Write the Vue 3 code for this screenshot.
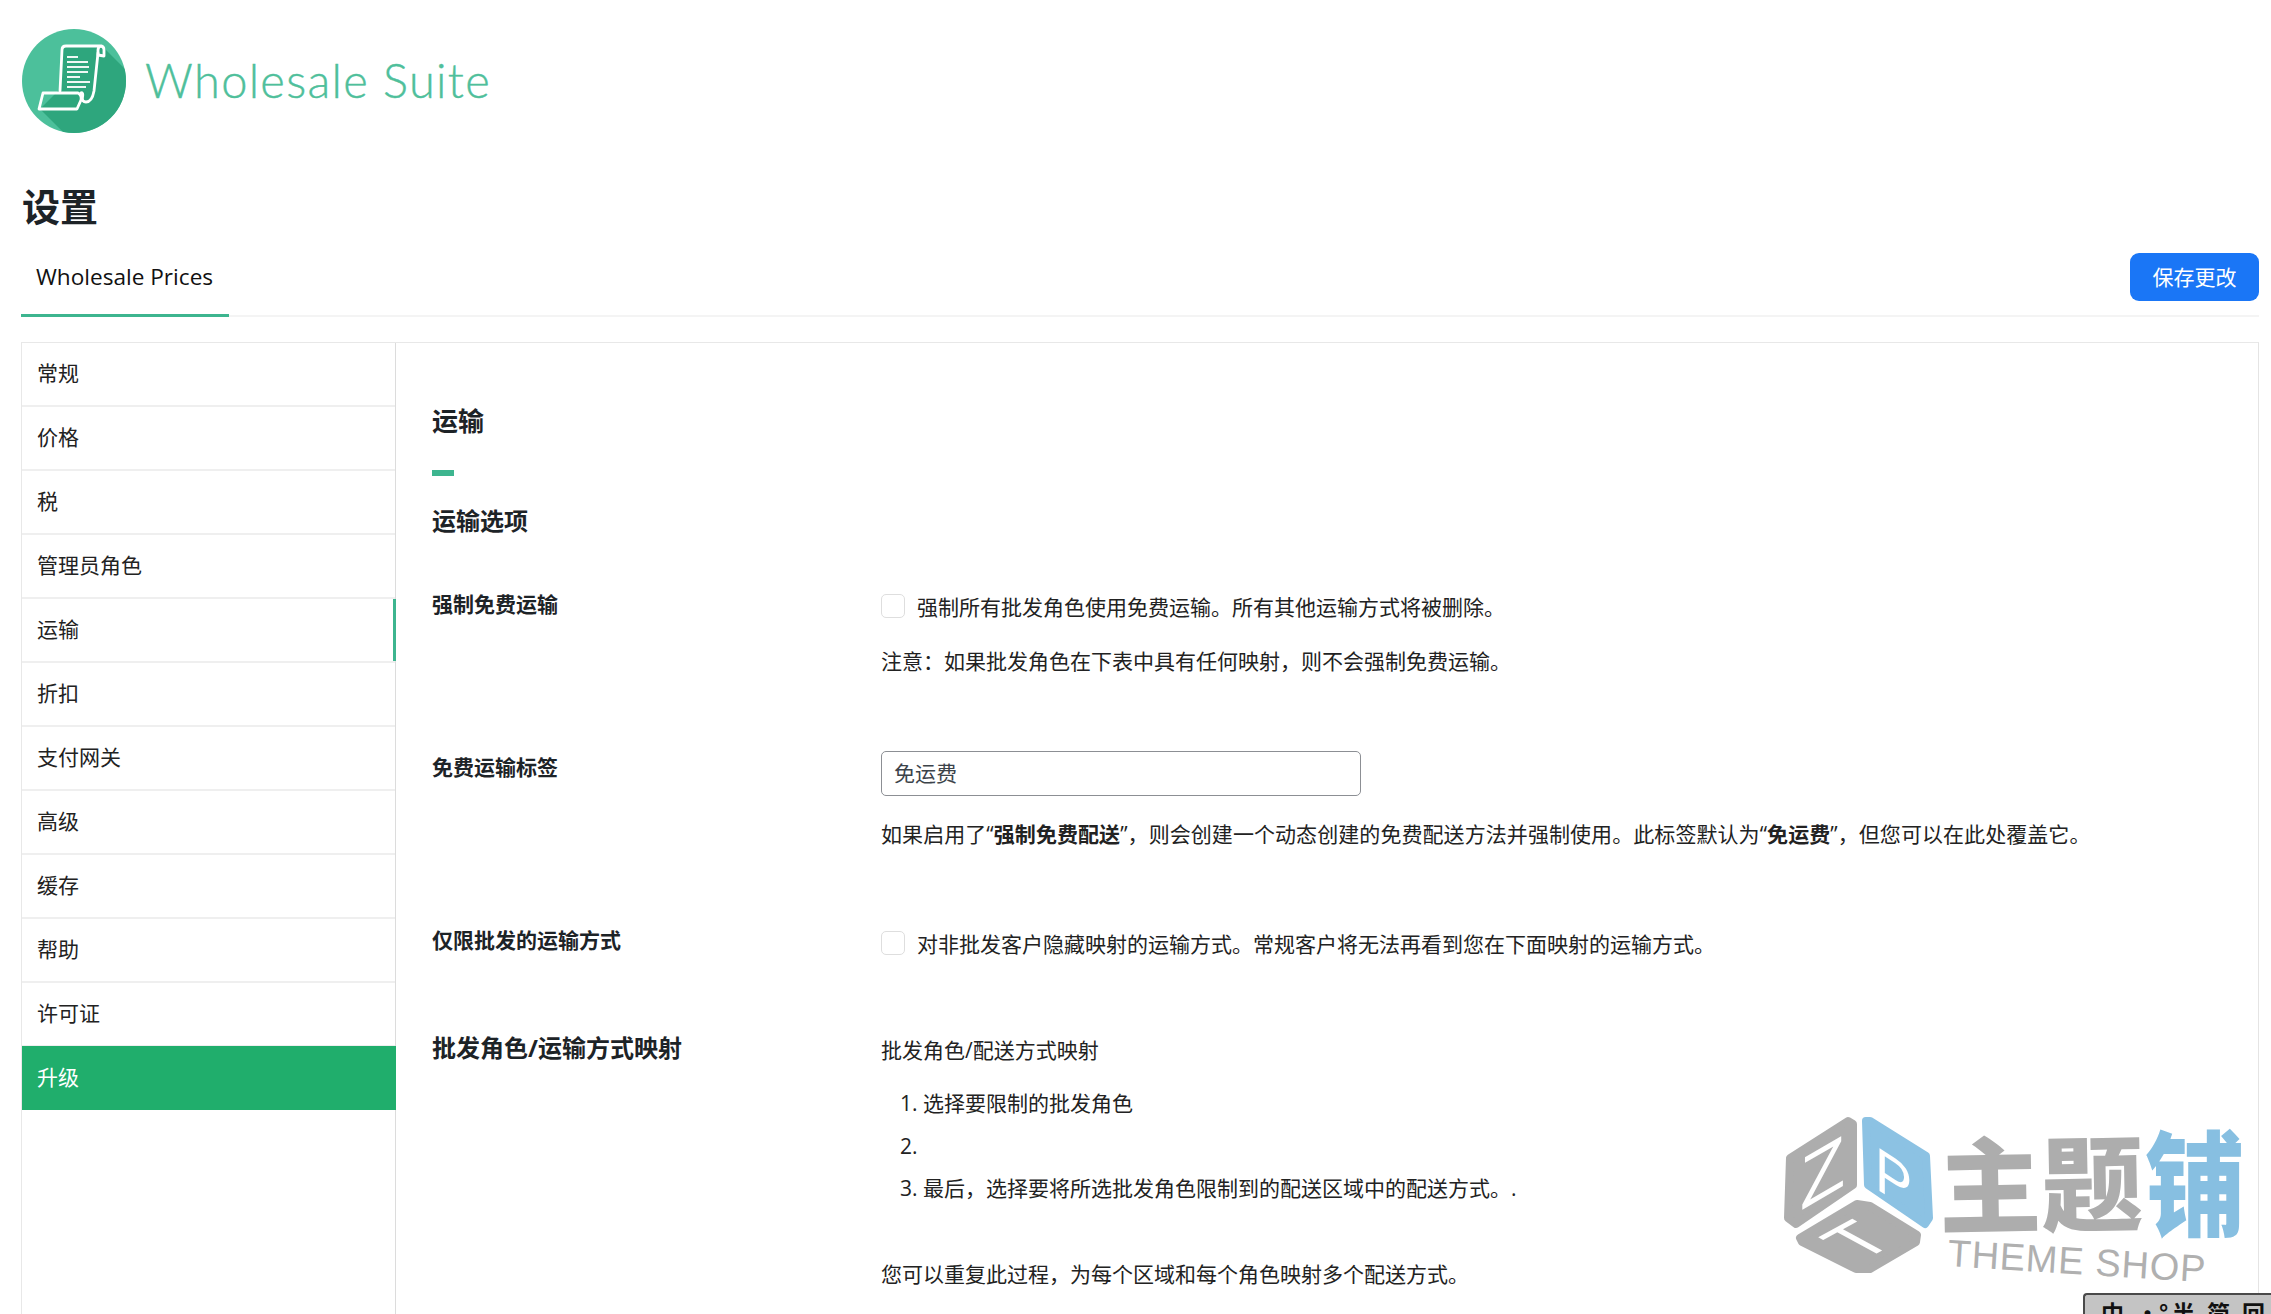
<script setup>
const navItems = [
  { label: '常规' },
  { label: '价格' },
  { label: '税' },
  { label: '管理员角色' },
  { label: '运输', active: true },
  { label: '折扣' },
  { label: '支付网关' },
  { label: '高级' },
  { label: '缓存' },
  { label: '帮助' },
  { label: '许可证' },
  { label: '升级', upgrade: true }
]
</script>

<template>
  <div class="page">
    <header class="brand">
      <svg class="brand-mark" viewBox="0 0 104 104" width="104" height="104" aria-hidden="true">
        <defs>
          <clipPath id="disc"><circle cx="52" cy="52" r="52" /></clipPath>
        </defs>
        <circle cx="52" cy="52" r="52" fill="#4cc09b" />
        <polygon clip-path="url(#disc)" points="80,17 120,57 120,120 58,120 18,80 38,60 40,17" fill="#2ea67d" />
        <g fill="none" stroke="#fff" stroke-width="2.8" stroke-linejoin="round" stroke-linecap="round">
          <path d="M38 62 L40 21 Q40 17 44 17 L78 17 Q82 17 82 21 L82 27 L76 26 L76 21 Q76 18 79 17" />
          <path d="M76 24 L72 62 Q70 73 64 73 Q60 73 60 68 L60 64" />
          <path d="M17 80 L21 64 L56 64 Q60 66 59 71 L55 80 Z" />
          <path d="M59 64 Q62 64 60 70" />
        </g>
        <g stroke="#fff" stroke-width="2" opacity="0.92">
          <line x1="45" y1="28" x2="56" y2="28" />
          <line x1="45" y1="33" x2="66" y2="33" />
          <line x1="45" y1="38" x2="67" y2="38" />
          <line x1="45" y1="43" x2="66" y2="43" />
          <line x1="45" y1="48" x2="58" y2="48" />
          <line x1="45" y1="53" x2="68" y2="53" />
          <line x1="45" y1="58" x2="64" y2="58" />
        </g>
      </svg>
      <span class="brand-name">Wholesale Suite</span>
    </header>

    <h1 class="title">设置</h1>

    <div class="tabs">
      <div class="tab">Wholesale Prices</div>
      <button class="save" type="button">保存更改</button>
    </div>

    <div class="panel">
      <nav class="side">
        <div
          v-for="item in navItems"
          :key="item.label"
          class="side-item"
          :class="{ active: item.active, upgrade: item.upgrade }"
        >{{ item.label }}</div>
      </nav>

      <main class="content">
        <h2 class="section">运输</h2>
        <div class="accent"></div>
        <h3 class="sub">运输选项</h3>

        <div class="row row-first">
          <div class="label">强制免费运输</div>
          <div class="field">
            <div class="check-line"><span class="check"></span><span>强制所有批发角色使用免费运输。所有其他运输方式将被删除。</span></div>
            <p class="note">注意：如果批发角色在下表中具有任何映射，则不会强制免费运输。</p>
          </div>
        </div>

        <div class="row">
          <div class="label">免费运输标签</div>
          <div class="field">
            <div class="input">免运费</div>
            <p class="hint">如果启用了“<strong>强制免费配送</strong>”，则会创建一个动态创建的免费配送方法并强制使用。此标签默认为“<strong>免运费</strong>”，但您可以在此处覆盖它。</p>
          </div>
        </div>

        <div class="row">
          <div class="label">仅限批发的运输方式</div>
          <div class="field field-check">
            <div class="check-line"><span class="check"></span><span>对非批发客户隐藏映射的运输方式。常规客户将无法再看到您在下面映射的运输方式。</span></div>
          </div>
        </div>

        <div class="row row-map">
          <div class="label label-big">批发角色/运输方式映射</div>
          <div class="field field-map">
            <p class="line">批发角色/配送方式映射</p>
            <ol class="steps">
              <li>选择要限制的批发角色</li>
              <li></li>
              <li>最后，选择要将所选批发角色限制到的配送区域中的配送方式。.</li>
            </ol>
            <p class="repeat">您可以重复此过程，为每个区域和每个角色映射多个配送方式。</p>
          </div>
        </div>
      </main>
    </div>

    <svg class="watermark" viewBox="0 0 531 234" width="531" height="234" aria-label="主题铺 THEME SHOP">
      <g stroke-linejoin="round" stroke-width="8">
        <polygon points="50,78 108,41 113,44 113,105 56,144 48,138" fill="#adadad" stroke="#adadad" />
        <polygon points="126,41 130,41 186,76 189,138 185,144 128,105" fill="#8cc2e3" stroke="#8cc2e3" />
        <polygon points="60,158 117,124 130,126 177,155 176,162 130,189 116,189 62,162" fill="#adadad" stroke="#adadad" />
      </g>
      <text class="wm-cube" transform="matrix(1,-0.58,0,1,60,131)" font-size="74">Z</text>
      <text class="wm-cube" transform="matrix(0.9,0.58,0,1,135,108)" font-size="62">P</text>
      <text class="wm-cube" transform="matrix(1.5,-0.82,1.6,0.87,121,182)" font-size="40">T</text>
      <text class="wm-cn" x="199" y="144" font-size="104" textLength="204" lengthAdjust="spacingAndGlyphs" transform="rotate(-1 300 105)">主题</text>
      <text class="wm-cn wm-blue" transform="translate(405 147) scale(0.98 1.11)" font-size="102">铺</text>
      <text class="wm-en" x="207" y="186" font-size="38" textLength="258" transform="rotate(3.6 207 186)">THEME SHOP</text>
    </svg>

    <div class="ime">
      <span class="ime-key">中</span>
      <span class="ime-punct">·°</span>
      <span class="ime-key">半</span>
      <span class="ime-key">简</span>
      <span class="ime-key">回</span>
    </div>
  </div>
</template>

<style>
html, body {
  margin: 0;
  background: #fff;
  overflow: hidden;
}
</style>

<style scoped>
.page {
  position: relative;
  width: 2271px;
  height: 1314px;
  overflow: hidden;
  box-sizing: border-box;
  padding: 29px 12px 0 21px;
  background: #fff;
  color: #222;
  font-family: "Open Sans", "Noto Sans CJK SC", sans-serif;
  font-size: 21px;
}
.brand {
  display: flex;
  align-items: center;
  height: 104px;
  padding-left: 1px;
}
.brand-mark {
  flex: none;
}
.brand-name {
  margin-left: 19px;
  padding-bottom: 2px;
  font-family: "Lato", sans-serif;
  font-weight: 300;
  font-size: 47px;
  letter-spacing: 1.3px;
  line-height: 1;
  color: #4fbf9b;
  -webkit-text-stroke: 0.4px #4fbf9b;
}
.title {
  margin: 48px 0 0 1px;
  font-size: 38px;
  line-height: 50px;
  font-weight: 700;
  color: #1d2327;
}
.tabs {
  display: flex;
  align-items: flex-start;
  justify-content: space-between;
  height: 86px;
  box-sizing: border-box;
  border-bottom: 2px solid #f4f4f4;
}
.tab {
  box-sizing: border-box;
  height: 86px;
  padding: 30px 16px 0 15px;
  line-height: 32px;
  font-size: 22.6px;
  color: #111;
  border-bottom: 3px solid #3db58f;
}
.save {
  margin-top: 22px;
  width: 129px;
  height: 48px;
  padding: 0;
  border: 0;
  border-radius: 9px;
  background: #1a76f6;
  color: #fff;
  font: inherit;
  line-height: 48px;
}
.panel {
  display: flex;
  margin-top: 25px;
  min-height: 1100px;
  border: 1px solid #e8e8e8;
  border-right-color: #e4e4e4;
}
.side {
  flex: none;
  width: 374px;
  box-sizing: border-box;
  border-right: 1px solid #dcdcdc;
}
.side-item {
  position: relative;
  box-sizing: border-box;
  height: 64px;
  padding-left: 15px;
  line-height: 60px;
  border-bottom: 2px solid #efefef;
  color: #222;
}
.side-item.active::after {
  content: "";
  position: absolute;
  top: 0;
  bottom: 0;
  right: -1px;
  width: 3px;
  background: #3db58f;
}
.side-item.upgrade {
  margin-top: -1px;
  margin-right: -1px;
  border-bottom: 0;
  line-height: 62px;
  background: #20ae6c;
  color: #fff;
}
.content {
  flex: 1;
  min-width: 0;
  padding: 60px 0 0 36px;
}
.section {
  margin: 0;
  font-size: 26px;
  line-height: 36px;
  font-weight: 700;
  color: #1d2327;
}
.accent {
  width: 22px;
  height: 6px;
  margin-top: 31px;
  background: #3db58f;
}
.sub {
  margin: 28px 0 0;
  font-size: 24px;
  line-height: 34px;
  font-weight: 700;
  color: #1d2327;
}
.row {
  display: grid;
  grid-template-columns: 449px 1fr;
  margin-top: 76px;
}
.row-first {
  margin-top: 51px;
}
.row-map {
  margin-top: 72px;
}
.label {
  font-weight: 700;
  line-height: 30px;
  color: #1d2327;
}
.label-big {
  font-size: 24px;
  line-height: 34px;
}
.field {
  line-height: 30px;
}
.check-line {
  display: flex;
  align-items: center;
  padding-top: 3px;
}
.field-check .check-line {
  padding-top: 4px;
}
.check {
  flex: none;
  box-sizing: border-box;
  width: 24px;
  height: 24px;
  margin-right: 12px;
  margin-top: -2px;
  border: 1px solid #dedede;
  border-radius: 5px;
  background: #fff;
}
.note {
  margin: 24px 0 0;
}
.input {
  box-sizing: border-box;
  width: 480px;
  height: 45px;
  margin-top: -1px;
  padding-left: 12px;
  border: 1px solid #8c8f94;
  border-radius: 5px;
  line-height: 43px;
  color: #3c434a;
}
.hint {
  margin: 23px 0 0;
  letter-spacing: 0.07px;
}
.hint strong {
  font-weight: 700;
}
.field-map {
  padding-top: 4px;
}
.line {
  margin: 0;
}
.steps {
  margin: 23px 0 0;
  padding: 0 0 0 42px;
}
.steps li {
  height: 30px;
  margin-bottom: 12.5px;
}
.repeat {
  margin: 56px 0 0;
}
.watermark {
  position: absolute;
  left: 1740px;
  top: 1080px;
  pointer-events: none;
}
.wm-cube {
  font-family: "Liberation Sans", sans-serif;
  fill: #fff;
}
.wm-cn {
  font-family: "Noto Sans CJK SC", sans-serif;
  font-weight: 900;
  fill: #adadad;
}
.wm-blue {
  fill: #87bfe1;
}
.wm-en {
  font-family: "Liberation Sans", sans-serif;
  fill: #b0b0b0;
}
.ime {
  position: absolute;
  left: 2083px;
  top: 1293px;
  right: 0;
  bottom: 0;
  display: flex;
  gap: 12px;
  box-sizing: border-box;
  padding: 2px 0 0 16px;
  overflow: hidden;
  background: #c4c4c4;
  border-top: 2px solid #4a4a4a;
  border-left: 2px solid #4a4a4a;
  border-top-left-radius: 4px;
  color: #111;
  line-height: 30px;
  font-size: 23px;
  font-weight: 700;
  font-family: "Noto Sans CJK SC", sans-serif;
}
.ime-punct {
  width: 24px;
}
</style>
